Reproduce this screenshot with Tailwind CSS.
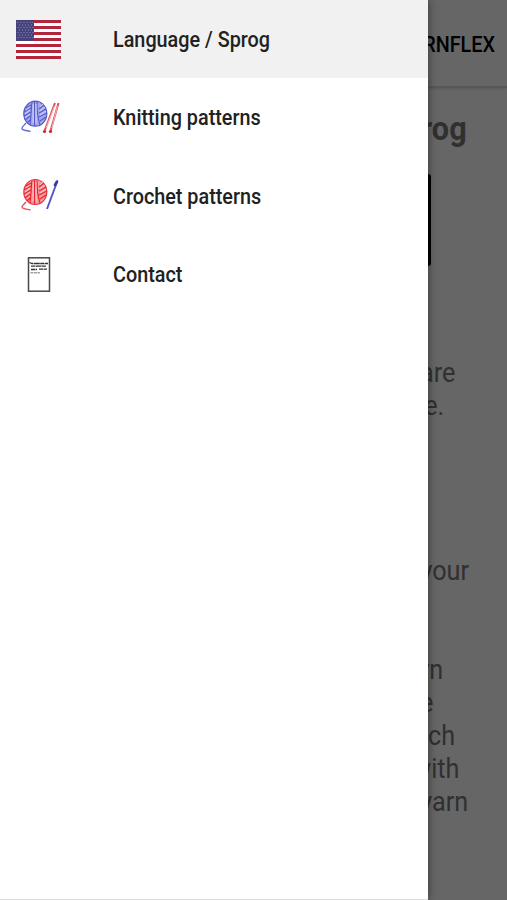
<!DOCTYPE html>
<html lang="en"><head><meta charset="utf-8"><title>Yarnflex</title>
<script src="https://cdn.jsdelivr.net/npm/@tailwindcss/browser@4"></script></head>
<body class="flex h-[900px] w-[507px] overflow-hidden bg-[#666] font-['Roboto',sans-serif]">
<nav class="relative z-10 h-[900px] w-[428px] shrink-0 border-b border-[#ddd] bg-white text-[22.5px] font-medium text-[#212121] shadow-[1px_0_8px_rgba(0,0,0,0.4)]">
  <a class="flex h-[78px] items-center bg-[#f1f1f1] pl-4">
    <svg class="h-[39px] w-[45px] shrink-0" viewBox="0 0 45 39" preserveAspectRatio="none">
      <rect width="45" height="39" fill="#fff"/>
      <path d="M0 1.500H45M0 7.500H45M0 13.500H45M0 19.500H45M0 25.500H45M0 31.500H45M0 37.500H45" stroke="#b3253a" stroke-width="3"/>
      <rect width="18" height="21" fill="#46437c"/>
      <path d="M1.500 2.500H18M3 5H18M1.500 7.500H18M3 10H18M1.500 12.500H18M3 15H18M1.500 17.500H18" stroke="#8f8db8" stroke-width="1" stroke-dasharray="1 2"/>
    </svg>
    <span class="ml-[52px] origin-left scale-x-[0.88] whitespace-nowrap pt-[1px]">Language / Sprog</span></a>
  <a class="flex h-[79px] items-center pl-4">
    <svg class="h-[45px] w-[45px] shrink-0" viewBox="0 0 45 45" fill="none">
      <ellipse cx="19.300" cy="18.700" rx="11.500" ry="12.500" fill="#a5a9e8" stroke="#5359cc" stroke-width="1.200"/>
      <path d="M16 7C15 14 15 24 14 30M18.500 6V31M21 7C21 15 22 24 24 30M10 13L15 10M8 17L15 13M8 21L15 17M9 25L14 21M11 28L14 25M23 14L28 10M23 18L30 14M23 22L31 18M24 26L30 22" stroke="#5359cc" stroke-width="1.100"/>
      <path d="M17.200 9V28M20 9V28M10 15L14 12M9 19L14 15M9 23L14 19M24 12L28 8M24 16L29 12M24 20L30 16" stroke="#dfe1fb" stroke-width=".8"/>
      <path d="M10 28C8.500 30 6 31.500 6 33.500C6 36 10 35 14.500 36.500" stroke="#666cd5" stroke-width="1.400"/>
      <path d="M39 8L28.500 36M42.500 8L34.500 36" stroke="#dc5054" stroke-width="2"/><path d="M38.500 11L30 33M41.500 11L35.800 33" stroke="#f9dada" stroke-width=".7"/>
      <circle cx="28.500" cy="36.500" r="1.600" fill="#d8252d"/><circle cx="34.500" cy="36.500" r="1.600" fill="#d8252d"/>
    </svg>
    <span class="ml-[52px] origin-left scale-x-[0.88] whitespace-nowrap pt-[1px]">Knitting patterns</span></a>
  <a class="flex h-[78px] items-center pl-4">
    <svg class="h-[45px] w-[45px] shrink-0" viewBox="0 0 45 45" fill="none">
      <ellipse cx="19.300" cy="18" rx="11.500" ry="12.500" fill="#f69a9d" stroke="#e3383e" stroke-width="1.200"/>
      <path d="M16 6.500C15 13 15 23 14 29M18.500 6V30M21 6.500C21 14 22 23 24 29M10 12L15 9M8 16L15 12M8 20L15 16M9 24L14 20M11 27L14 24M23 13L28 9M23 17L30 13M23 21L31 17M24 25L30 21" stroke="#e5252d" stroke-width="1.200"/>
      <path d="M17.200 8V27M20 8V27M10 14L14 11M9 18L14 14M9 22L14 18M24 11L28 7M24 15L29 11M24 19L30 15" stroke="#fee0e1" stroke-width=".7"/>
      <path d="M10 28C8.500 30 6 31 6 33C6 35 10 35 14.500 36" stroke="#e75256" stroke-width="1.400"/>
      <path d="M41 8L31 35" stroke="#5057c4" stroke-width="1.900"/><path d="M41 7.500L39 11" stroke="#333ba8" stroke-width="2.600" stroke-linecap="round"/>
    </svg>
    <span class="ml-[52px] origin-left scale-x-[0.88] whitespace-nowrap pt-[1px]">Crochet patterns</span></a>
  <a class="flex h-[79px] items-center pl-4">
    <svg class="h-[45px] w-[45px] shrink-0" viewBox="0 0 45 45" fill="none">
      <rect x="12.500" y="5.800" width="21" height="33.400" stroke="#484848" stroke-width="1.500"/>
      <path d="M13.500 10.500L16 11.500H32M15 14.200H30M15 17.500H21M23 17.200H31" stroke="#333" stroke-width="1.300" stroke-dasharray="4 .5 6 .4"/><path d="M14.500 20.800H24" stroke="#777" stroke-width="1" stroke-dasharray="3 .5"/>
    </svg>
    <span class="ml-[52px] origin-left scale-x-[0.88] whitespace-nowrap pt-[1px]">Contact</span></a>
</nav>
<main class="h-[900px] w-[79px] overflow-hidden text-[28px] leading-[33px] text-[#303030]">
  <header class="flex h-[88px] items-center justify-end border-b-2 border-[#585858] pr-3 pt-[2px] text-[22.5px] font-medium text-black shadow-[0_1px_2px_rgba(0,0,0,0.1)]"><span class="origin-right scale-x-[0.88]">YARNFLEX</span></header>
  <h1 class="mt-6 flex h-[33px] justify-end pr-10 text-[34px] font-bold"><span class="origin-right scale-x-[0.9]">Sprog</span></h1>
  <div class="mt-[29px] h-[92px] w-[3px] rounded-r-sm bg-black"></div>
  <div class="mt-[90px] flex justify-end pr-[52px]"><span class="origin-right scale-x-[0.9]">are</span></div>
  <div class="flex justify-end pr-[63px]"><span class="origin-right scale-x-[0.9]">e.</span></div>
  <div class="mt-[132px] flex justify-end pr-[38px]"><span class="origin-right scale-x-[0.9]">your</span></div>
  <div class="mt-[66px] flex justify-end pr-[64px]"><span class="origin-right scale-x-[0.9]">yarn</span></div>
  <div class="flex justify-end pr-[74px]"><span class="origin-right scale-x-[0.9]">the</span></div>
  <div class="flex justify-end pr-[52px]"><span class="origin-right scale-x-[0.9]">each</span></div>
  <div class="flex justify-end pr-[48px]"><span class="origin-right scale-x-[0.9]">with</span></div>
  <div class="flex justify-end pr-[39px]"><span class="origin-right scale-x-[0.9]">yarn</span></div>
</main>
</body></html>
